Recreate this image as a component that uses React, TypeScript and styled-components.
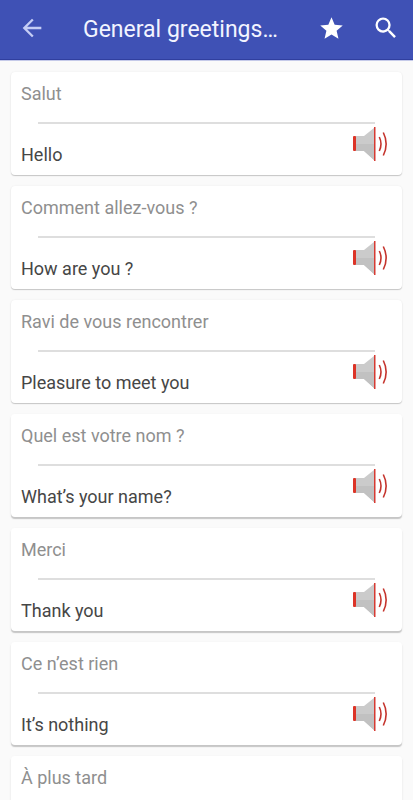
import React from "react";
import styled, { createGlobalStyle } from "styled-components";

const GlobalStyle = createGlobalStyle`
  *, *::before, *::after { box-sizing: border-box; }
  body {
    margin: 0;
    background: #fafafa;
    font-family: Roboto, "Liberation Sans", sans-serif;
  }
`;

const Screen = styled.div`
  display: flex;
  flex-direction: column;
  height: 100vh;
  overflow: hidden;
`;

const Toolbar = styled.header`
  flex: none;
  display: flex;
  align-items: center;
  height: 60px;
  padding: 0 11px 3px 16px;
  background: #3f51b5;
  border-bottom: 1px solid #303f9f;
  box-shadow: 0 1px 0 #c5cae9;
`;

const IconButton = styled.button<{ $tint?: string }>`
  flex: none;
  display: flex;
  align-items: center;
  justify-content: center;
  width: 32px;
  height: 32px;
  padding: 0;
  border: 0;
  background: none;
  color: ${(p) => p.$tint ?? "#ffffff"};
  cursor: pointer;
`;

const Title = styled.h1`
  flex: 1;
  min-width: 0;
  margin: 0 0 0 35px;
  padding-top: 3px;
  overflow: hidden;
  color: #f2f4ff;
  font-size: 23px;
  font-weight: 400;
  line-height: 32px;
  white-space: nowrap;
`;

const Actions = styled.div`
  display: flex;
  gap: 23px;
`;

const PhraseList = styled.ul`
  flex: 1;
  min-height: 0;
  display: flex;
  flex-direction: column;
  gap: 11px;
  margin: 0;
  padding: 12px 11px;
  overflow-y: auto;
  scrollbar-width: none;
  list-style: none;
`;

const Card = styled.li<{ $raised: boolean }>`
  flex: none;
  padding: 10px 10px 0;
  border-radius: 4px;
  background: #ffffff;
  box-shadow: ${(p) =>
    p.$raised
      ? "0 2px 1px #c6c6c6, 0 1px 3px #f0f0f0"
      : "0 1px 1px #c6c6c6, 0 0 2px #ececec"};
`;

const Source = styled.p`
  margin: 0;
  color: #8f8f8f;
  font-size: 18px;
  line-height: 24px;
`;

const Divider = styled.hr`
  height: 2px;
  margin: 16px 17px 0;
  border: 0;
  background: #dedede;
`;

const TargetRow = styled.div`
  display: flex;
  height: 51px;
  padding-right: 3px;
`;

const Target = styled.p`
  margin: 0;
  padding-top: 19px;
  color: #464646;
  font-size: 18px;
  line-height: 24px;
`;

const SpeakButton = styled.button`
  flex: none;
  width: 37px;
  height: 36px;
  margin-top: 3px;
  margin-left: auto;
  padding: 0;
  border: 0;
  background: none;
  cursor: pointer;
`;

const SpeakerIcon = () => (
  <svg width="37" height="36" viewBox="0 0 37 36" display="block" aria-hidden="true">
    <path d="M3 9H12L22 1V33L12 24H3Z" fill="#cbcbcb" />
    <path d="M3 17H22V33L12 24H3Z" fill="#c1c1c1" />
    <rect x="1" y="9" width="3" height="15" rx="1" fill="#dc3427" />
    <rect x="22" y="0" width="1.5" height="34" fill="#d63a32" />
    <path d="M27.3 10Q30.7 16.8 27.3 24" fill="none" stroke="#c5342d" strokeWidth="1.6" />
    <path d="M31.3 5.5Q37 16.8 31.3 28.5" fill="none" stroke="#c5342d" strokeWidth="1.6" />
  </svg>
);

const phrases: { source: string; target?: string }[] = [
  { source: "Salut", target: "Hello" },
  { source: "Comment allez-vous ?", target: "How are you ?" },
  { source: "Ravi de vous rencontrer", target: "Pleasure to meet you" },
  { source: "Quel est votre nom ?", target: "What’s your name?" },
  { source: "Merci", target: "Thank you" },
  { source: "Ce n’est rien", target: "It’s nothing" },
  { source: "À plus tard" },
];

export default function App() {
  return (
    <Screen>
      <GlobalStyle />
      <Toolbar>
        <IconButton type="button" aria-label="Back" $tint="#c5cdf5">
          <svg width="28" height="28" viewBox="0 0 24 24" fill="currentColor">
            <path d="M20 11H7.83l5.59-5.59L12 4l-8 8 8 8 1.41-1.41L7.83 13H20v-2z" />
          </svg>
        </IconButton>
        <Title>General greetings…</Title>
        <Actions>
          <IconButton type="button" aria-label="Favourites">
            <svg width="27" height="27" viewBox="0 0 24 24" fill="currentColor">
              <path d="M12 17.27L18.18 21l-1.64-7.03L22 9.24l-7.19-.61L12 2 9.19 8.63 2 9.24l5.46 4.73L5.82 21z" />
            </svg>
          </IconButton>
          <IconButton type="button" aria-label="Search">
            <svg width="28" height="28" viewBox="0 0 24 24" fill="currentColor">
              <path d="M15.5 14h-.79l-.28-.27A6.471 6.471 0 0 0 16 9.5 6.5 6.5 0 1 0 9.5 16c1.61 0 3.09-.59 4.23-1.57l.27.28v.79l5 4.99L20.49 19l-4.99-5zm-6 0C7.01 14 5 11.99 5 9.5S7.01 5 9.5 5 14 7.01 14 9.5 11.99 14 9.5 14z" />
            </svg>
          </IconButton>
        </Actions>
      </Toolbar>
      <PhraseList>
        {phrases.map(({ source, target }, index) => (
          <Card key={source} $raised={index > 2}>
            <Source lang="fr">{source}</Source>
            <Divider />
            <TargetRow>
              {target && <Target>{target}</Target>}
              <SpeakButton type="button" aria-label={`Listen to ${source}`}>
                <SpeakerIcon />
              </SpeakButton>
            </TargetRow>
          </Card>
        ))}
      </PhraseList>
    </Screen>
  );
}
